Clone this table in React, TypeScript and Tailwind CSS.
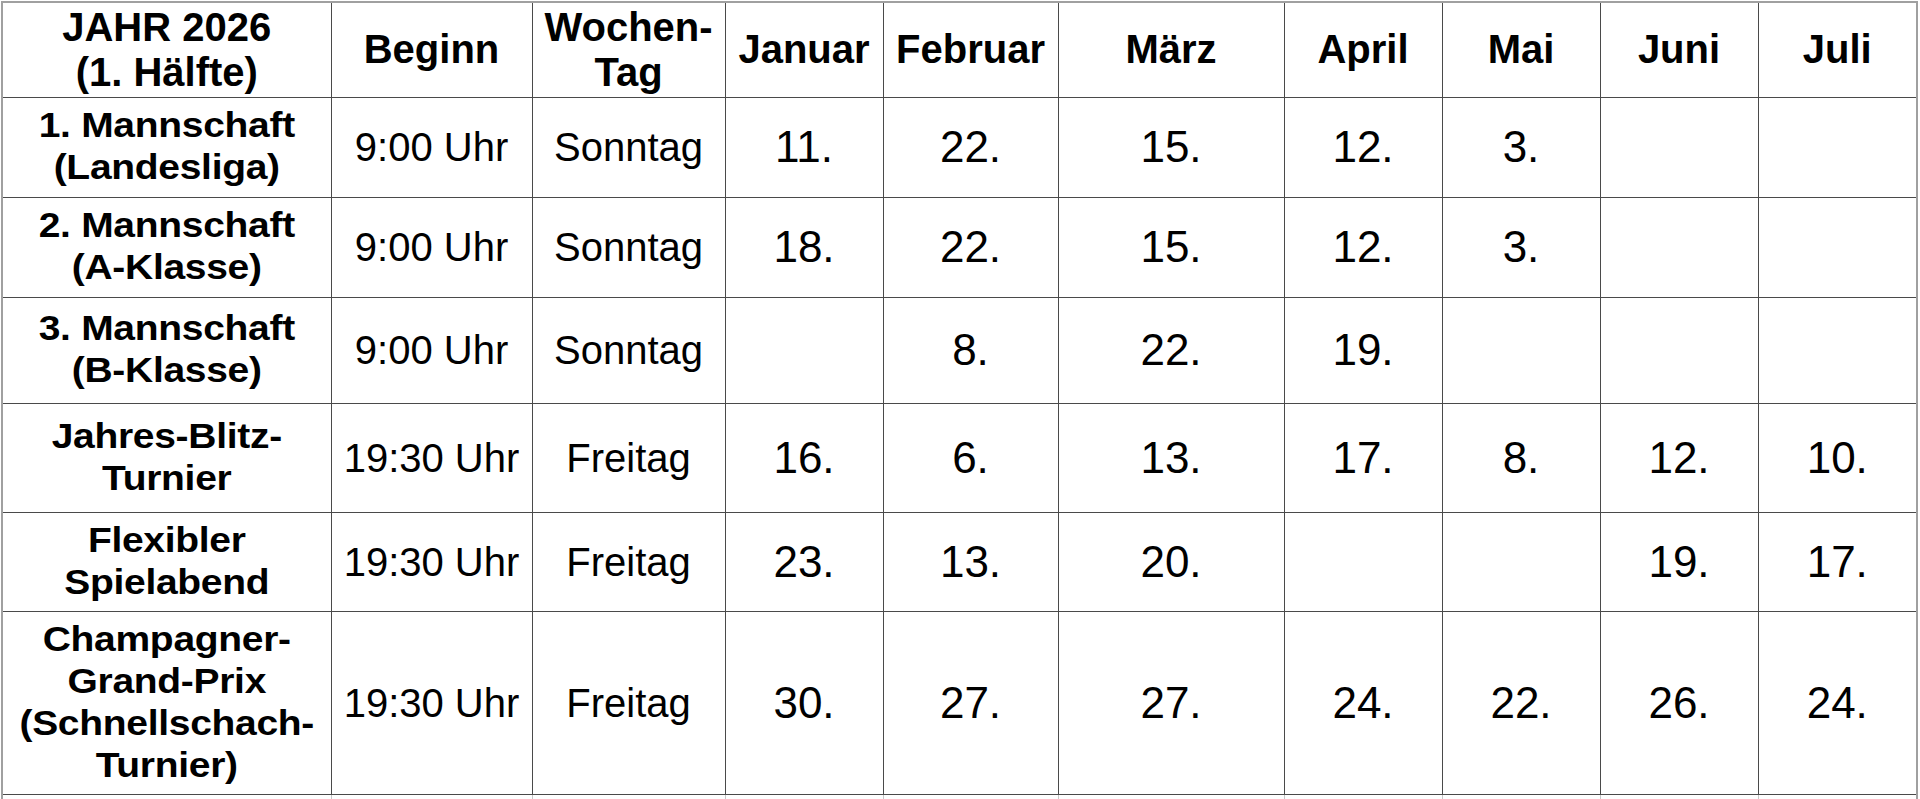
import React from "react";

const months = ["Januar", "Februar", "März", "April", "Mai", "Juni", "Juli"];

type Row = { label: string[]; time: string; day: string; dates: string[]; h: string };

const rows: Row[] = [
  { label: ["1. Mannschaft", "(Landesliga)"], time: "9:00 Uhr", day: "Sonntag", dates: ["11.", "22.", "15.", "12.", "3.", "", ""], h: "h-[100px]" },
  { label: ["2. Mannschaft", "(A-Klasse)"], time: "9:00 Uhr", day: "Sonntag", dates: ["18.", "22.", "15.", "12.", "3.", "", ""], h: "h-[100px]" },
  { label: ["3. Mannschaft", "(B-Klasse)"], time: "9:00 Uhr", day: "Sonntag", dates: ["", "8.", "22.", "19.", "", "", ""], h: "h-[106px]" },
  { label: ["Jahres-Blitz-", "Turnier"], time: "19:30 Uhr", day: "Freitag", dates: ["16.", "6.", "13.", "17.", "8.", "12.", "10."], h: "h-[109px]" },
  { label: ["Flexibler", "Spielabend"], time: "19:30 Uhr", day: "Freitag", dates: ["23.", "13.", "20.", "", "", "19.", "17."], h: "h-[99px]" },
  { label: ["Champagner-", "Grand-Prix", "(Schnellschach-", "Turnier)"], time: "19:30 Uhr", day: "Freitag", dates: ["30.", "27.", "27.", "24.", "22.", "26.", "24."], h: "h-[183px]" },
];

const widths = ["w-[329px]", "w-[201px]", "w-[193px]", "w-[158px]", "w-[175px]", "w-[226px]", "w-[158px]", "w-[158px]", "w-[158px]", "w-[159px]"];

const cell = "border border-[#4a4a4a] text-center align-middle p-0";

export default function App() {
  return (
    <div
      className="h-[799px] w-[1920px] overflow-hidden bg-white text-black"
      style={{ fontFamily: '"Liberation Sans", Arial, Helvetica, sans-serif' }}
    >
      <div className="pl-[1px] pt-[1px]">
        <table className="table-fixed border-collapse border-2 border-[#a0a0a0]">
          <colgroup>
            {widths.map((w, i) => (
              <col key={i} className={w} />
            ))}
          </colgroup>
          <thead>
            <tr className="h-[95px]">
              <th className={`${cell} text-[40px] font-bold leading-[45px]`}>
                JAHR 2026
                <br />
                (1. Hälfte)
              </th>
              <th className={`${cell} text-[40px] font-bold leading-[45px]`}>Beginn</th>
              <th className={`${cell} text-[40px] font-bold leading-[45px]`}>
                Wochen-
                <br />
                Tag
              </th>
              {months.map((m) => (
                <th key={m} className={`${cell} text-[40px] font-bold leading-[45px]`}>
                  {m}
                </th>
              ))}
            </tr>
          </thead>
          <tbody>
            {rows.map((r, i) => (
              <tr key={i} className={r.h}>
                <td className={`${cell} text-[39px] font-bold leading-[42px] tracking-[-0.3px]`}>
                  {r.label.map((l, j) => (
                    <div key={j} className="whitespace-nowrap">
                      <span className="inline-block scale-y-[0.88]">{l}</span>
                    </div>
                  ))}
                </td>
                <td className={`${cell} text-[40px] leading-[44px]`}>{r.time}</td>
                <td className={`${cell} text-[40px] leading-[44px]`}>{r.day}</td>
                {r.dates.map((d, j) => (
                  <td key={j} className={`${cell} text-[44px] leading-[48px]`}>
                    {d}
                  </td>
                ))}
              </tr>
            ))}
            <tr className="h-[30px]">
              {widths.map((_, i) => (
                <td key={i} className="border border-[#c8c8c8] p-0" />
              ))}
            </tr>
          </tbody>
        </table>
      </div>
    </div>
  );
}
